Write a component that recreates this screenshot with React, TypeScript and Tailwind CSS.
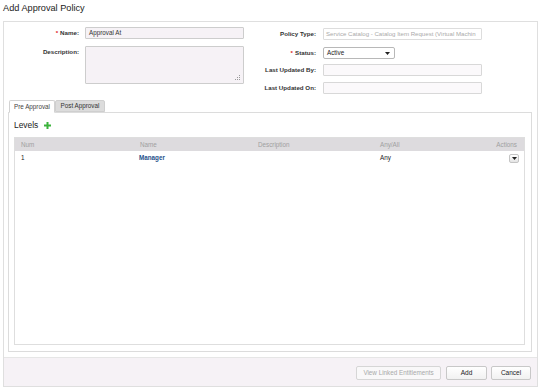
import React from "react"

function Field({ label, required, children, labelWidth }: { label: string; required?: boolean; children: React.ReactNode; labelWidth: string }) {
  return (
    <div className="flex items-start">
      <div className={`${labelWidth} shrink-0 h-[12px] flex items-center justify-end font-bold text-[6.2px] text-[#333]`}>
        {required && <span className="text-[#d22] mr-[2px]">*</span>}
        {label}
      </div>
      {children}
    </div>
  )
}

function Caret() {
  return (
    <svg width="5" height="3" viewBox="0 0 5 3">
      <path d="M0 0h5L2.5 3z" fill="#222" />
    </svg>
  )
}

export default function App() {
  return (
    <div className="w-[540px] h-[388px] bg-white overflow-hidden font-['Liberation_Sans',Arial,sans-serif] text-[#333]">
      <div className="h-[21px] pl-[3px] pt-[3px] text-[9.2px] leading-[11px] text-[#222]">Add Approval Policy</div>

      <div className="ml-[3px] w-[535px] h-[366px] border border-[#dfdfdf] flex flex-col">
        {/* form */}
        <div className="h-[78px] flex">
          <div className="w-[246px] pt-[5px] flex flex-col gap-[7px]">
            <Field label="Name:" required labelWidth="w-[75px]">
              <div className="ml-[6px] w-[159px] h-[12px] border border-[#cdcdcd] bg-[#f6f2f6] rounded-[1px] px-[3px] flex items-center text-[6.3px] text-[#333]">
                Approval At
              </div>
            </Field>
            <Field label="Description:" labelWidth="w-[75px]">
              <div className="relative ml-[6px] w-[159px] h-[38px] border border-[#cdcdcd] bg-[#f6f2f6] rounded-[1px]">
                <svg className="absolute right-[3px] bottom-[3px]" width="5" height="5" viewBox="0 0 5 5">
                  <rect x="4" y="0" width="1" height="1" fill="#999" />
                  <rect x="2" y="2" width="1" height="1" fill="#999" />
                  <rect x="4" y="2" width="1" height="1" fill="#999" />
                  <rect x="0" y="4" width="1" height="1" fill="#999" />
                  <rect x="2" y="4" width="1" height="1" fill="#999" />
                  <rect x="4" y="4" width="1" height="1" fill="#999" />
                </svg>
              </div>
            </Field>
          </div>

          <div className="pt-[6px] flex flex-col">
            <Field label="Policy Type:" labelWidth="w-[66px]">
              <div className="ml-[7px] w-[159px] h-[12px] border border-[#dddddd] bg-white rounded-[1px] px-[2px] flex items-center text-[6.1px] text-[#aaa] whitespace-nowrap overflow-hidden">
                Service Catalog - Catalog Item Request (Virtual Machin
              </div>
            </Field>
            <div className="mt-[7px]">
              <Field label="Status:" required labelWidth="w-[66px]">
                <div className="ml-[7px] w-[72px] h-[12px] border border-[#b8b8b8] bg-white rounded-[2px] pl-[3px] pr-[4px] flex items-center justify-between text-[6.3px] text-[#222]">
                  <span>Active</span>
                  <Caret />
                </div>
              </Field>
            </div>
            <div className="mt-[5px]">
              <Field label="Last Updated By:" labelWidth="w-[66px]">
                <div className="ml-[7px] w-[159px] h-[12px] border border-[#d8d8d8] bg-[#fbf9fb] rounded-[1px]" />
              </Field>
            </div>
            <div className="mt-[6px]">
              <Field label="Last Updated On:" labelWidth="w-[66px]">
                <div className="ml-[7px] w-[159px] h-[12px] border border-[#d8d8d8] bg-[#fbf9fb] rounded-[1px]" />
              </Field>
            </div>
          </div>
        </div>

        {/* tabs */}
        <div className="ml-[4px] h-[12px] flex items-end pl-[1px] relative z-10">
          <div className="h-[13px] -mb-[1px] w-[46px] border border-[#d2d2d2] border-b-white bg-white rounded-t-[2px] flex items-center justify-center text-[6.3px] text-[#444]">
            Pre Approval
          </div>
          <div className="h-[12px] w-[50px] border border-[#cfcfcf] bg-[#dcdcdc] rounded-t-[2px] flex items-center justify-center text-[6.3px] text-[#333]">
            Post Approval
          </div>
        </div>

        <div className="ml-[4px] w-[524px] h-[240px] border border-[#dcdcdc] pl-[5px] pr-[6px] pb-[6px] flex flex-col">
          <div className="h-[24px] flex items-center gap-[6px] text-[8.4px] text-[#222]">
            <span>Levels</span>
            <svg width="7" height="7" viewBox="0 0 7 7">
              <path d="M2.5 0h2v2.5H7v2H4.5V7h-2V4.5H0v-2h2.5z" fill="#3bb33b" />
            </svg>
          </div>
          <div className="flex-1 border border-[#dedede] flex flex-col">
            <div className="h-[13px] bg-[#dddbde] grid grid-cols-[119px_118px_122px_1fr] items-center text-[6.3px] text-[#a0a0a0]">
              <span className="pl-[6px]">Num</span>
              <span className="pl-[6px]">Name</span>
              <span className="pl-[6px]">Description</span>
              <span className="pl-[6px] flex justify-between pr-[7px]">
                <span>Any/All</span>
                <span>Actions</span>
              </span>
            </div>
            <div className="h-[14px] grid grid-cols-[119px_118px_122px_1fr] items-center text-[6.3px] text-[#222]">
              <span className="pl-[6px]">1</span>
              <span className="pl-[5px] font-bold text-[#1e4f8a]">Manager</span>
              <span className="pl-[6px]"></span>
              <span className="pl-[6px] flex items-center justify-between pr-[5px]">
                <span>Any</span>
                <span className="w-[10px] h-[9px] border border-[#c4c4c4] rounded-[2px] bg-gradient-to-b from-white to-[#e4e4e4] flex items-center justify-center">
                  <Caret />
                </span>
              </span>
            </div>
          </div>
        </div>

        <div className="h-[5px]" />

        {/* footer */}
        <div className="flex-1 border-t border-[#e6e6e6] bg-[#f6f2f6] flex items-center justify-end pr-[6px] pt-[1px]">
          <button className="w-[85px] h-[14px] border border-[#d6d6d6] bg-[#f9f8f9] rounded-[2px] text-[6.3px] text-[#a8a8a8]">
            View Linked Entitlements
          </button>
          <button className="ml-[5px] w-[41px] h-[14px] border border-[#c8c8c8] bg-gradient-to-b from-white to-[#f1f1f1] rounded-[2px] text-[6.5px] text-[#222]">
            Add
          </button>
          <button className="ml-[4px] w-[40px] h-[14px] border border-[#c8c8c8] bg-gradient-to-b from-white to-[#f1f1f1] rounded-[2px] text-[6.5px] text-[#222]">
            Cancel
          </button>
        </div>
      </div>
    </div>
  )
}
